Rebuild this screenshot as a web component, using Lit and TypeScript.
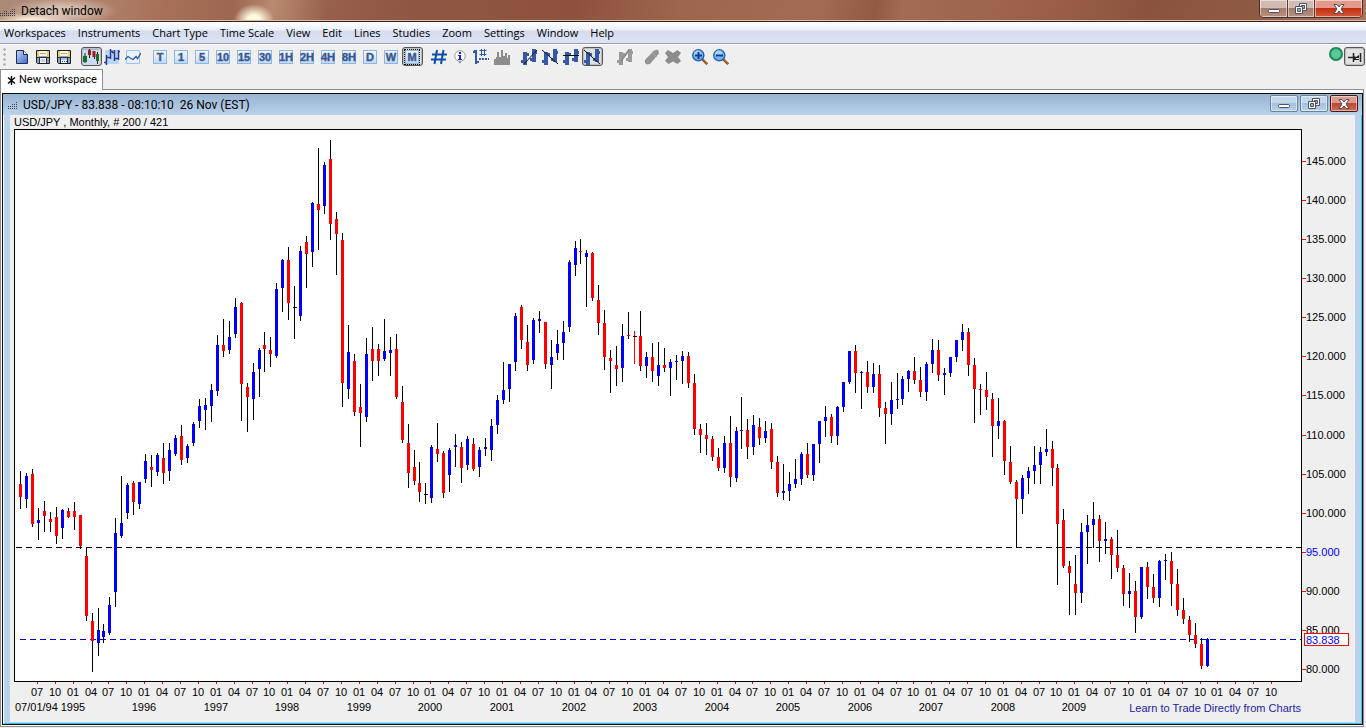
import { LitElement, html, svg, css } from "lit";
import { customElement } from "lit/decorators.js";
import { classMap } from "lit/directives/class-map.js";
import { styleMap } from "lit/directives/style-map.js";

type Tone = "u" | "d" | "n" | "r";
type Candle = [number, number, number, number, Tone];

// Plot space: x grows with time, y grows with falling price.
const PLOT = { x: 15, y: 130, w: 1286, h: 551 };

// high, body top, body bottom, low, tone (up, down, neutral, neutral with red wick)
const CANDLES: Candle[] = [
  [471, 484, 497, 509, "d"], [473, 476, 499, 508, "u"], [469, 474, 524, 527, "d"], [508, 520, 523, 540, "u"],
  [501, 511, 516, 532, "d"], [512, 519, 522, 532, "d"], [507, 517, 536, 544, "d"], [509, 510, 528, 539, "u"],
  [508, 511, 517, 518, "d"], [502, 511, 517, 530, "d"], [515, 515, 546, 549, "d"], [547, 556, 616, 621, "d"],
  [613, 621, 641, 672, "d"], [608, 630, 643, 656, "u"], [624, 631, 637, 643, "u"], [597, 605, 633, 635, "u"],
  [518, 533, 592, 607, "u"], [476, 523, 536, 538, "u"], [483, 485, 513, 519, "u"], [481, 483, 502, 515, "d"],
  [482, 482, 504, 509, "u"], [454, 461, 479, 483, "u"], [455, 467, 470, 487, "d"], [453, 455, 472, 476, "u"],
  [443, 458, 473, 484, "d"], [443, 450, 471, 481, "u"], [435, 438, 454, 456, "u"], [425, 436, 460, 465, "d"],
  [444, 446, 458, 463, "u"], [422, 424, 443, 446, "u"], [399, 406, 421, 428, "u"], [398, 405, 410, 430, "u"],
  [384, 390, 406, 422, "u"], [335, 345, 391, 396, "u"], [319, 345, 351, 357, "d"], [321, 337, 350, 354, "u"],
  [298, 307, 334, 338, "u"], [302, 303, 384, 421, "d"], [383, 387, 397, 432, "d"], [363, 372, 399, 420, "u"],
  [348, 350, 369, 397, "u"], [332, 345, 349, 372, "d"], [337, 350, 354, 367, "d"], [283, 289, 356, 358, "u"],
  [259, 260, 288, 312, "u"], [247, 260, 303, 320, "d"], [286, 307, 308, 339, "n"], [246, 251, 316, 321, "u"],
  [236, 242, 254, 288, "d"], [202, 203, 252, 267, "u"], [148, 204, 210, 250, "d"], [162, 165, 206, 214, "u"],
  [140, 159, 224, 240, "d"], [212, 219, 234, 275, "d"], [233, 240, 383, 407, "d"], [325, 352, 389, 399, "u"],
  [354, 361, 412, 416, "d"], [384, 407, 413, 447, "d"], [338, 354, 417, 422, "u"], [327, 349, 361, 381, "d"],
  [344, 349, 361, 376, "d"], [319, 351, 359, 361, "u"], [337, 350, 353, 376, "u"], [334, 349, 397, 399, "d"],
  [386, 402, 440, 443, "d"], [424, 443, 473, 488, "d"], [450, 467, 481, 485, "d"], [462, 483, 492, 502, "d"],
  [483, 494, 495, 504, "n"], [445, 447, 498, 503, "u"], [423, 449, 454, 462, "d"], [451, 453, 493, 498, "d"],
  [448, 450, 475, 492, "u"], [434, 445, 447, 467, "u"], [442, 447, 468, 483, "d"], [436, 439, 465, 470, "u"],
  [438, 444, 469, 471, "d"], [447, 450, 467, 477, "u"], [438, 447, 449, 456, "u"], [419, 426, 450, 461, "u"],
  [395, 400, 425, 434, "u"], [362, 390, 400, 404, "u"], [364, 364, 389, 402, "u"], [313, 316, 362, 371, "u"],
  [305, 307, 340, 349, "d"], [325, 342, 365, 371, "d"], [318, 320, 360, 364, "u"], [311, 319, 321, 333, "u"],
  [322, 322, 364, 369, "d"], [340, 357, 365, 389, "u"], [330, 344, 353, 360, "u"], [321, 332, 343, 360, "u"],
  [260, 262, 327, 332, "u"], [241, 248, 265, 276, "u"], [239, 251, 252, 264, "d"], [250, 253, 257, 307, "u"],
  [252, 253, 298, 301, "d"], [285, 300, 323, 335, "d"], [310, 323, 357, 370, "d"], [350, 358, 361, 393, "d"],
  [346, 365, 369, 386, "d"], [324, 336, 368, 382, "u"], [312, 335, 336, 339, "d"], [331, 336, 337, 364, "r"],
  [311, 336, 366, 371, "d"], [352, 357, 366, 378, "u"], [343, 357, 371, 382, "d"], [342, 365, 376, 386, "u"],
  [348, 365, 368, 372, "d"], [359, 362, 368, 396, "u"], [355, 361, 362, 380, "u"], [351, 356, 361, 384, "u"],
  [352, 356, 383, 388, "d"], [374, 383, 429, 435, "d"], [424, 429, 435, 453, "d"], [423, 435, 439, 455, "d"],
  [436, 439, 457, 461, "d"], [448, 457, 468, 471, "d"], [436, 443, 468, 473, "u"], [416, 443, 477, 487, "d"],
  [427, 431, 478, 482, "u"], [397, 430, 431, 449, "u"], [419, 430, 447, 459, "d"], [415, 425, 447, 455, "u"],
  [418, 427, 438, 445, "d"], [421, 431, 438, 443, "u"], [423, 429, 462, 469, "d"], [456, 462, 493, 497, "d"],
  [464, 491, 493, 500, "u"], [472, 484, 491, 501, "u"], [459, 479, 484, 488, "u"], [452, 454, 479, 485, "u"],
  [443, 454, 475, 478, "d"], [444, 444, 475, 481, "u"], [421, 421, 444, 463, "u"], [406, 417, 421, 437, "u"],
  [414, 417, 436, 443, "d"], [406, 407, 436, 445, "u"], [382, 382, 407, 412, "u"], [351, 351, 382, 384, "u"],
  [345, 351, 373, 393, "d"], [371, 372, 373, 409, "u"], [361, 372, 387, 393, "d"], [363, 374, 387, 393, "u"],
  [365, 374, 408, 417, "d"], [402, 408, 414, 444, "d"], [382, 400, 414, 425, "u"], [373, 399, 400, 409, "u"],
  [376, 379, 399, 405, "u"], [370, 371, 379, 392, "u"], [357, 371, 380, 384, "d"], [367, 380, 392, 397, "d"],
  [362, 364, 392, 401, "u"], [339, 350, 364, 373, "u"], [340, 350, 375, 381, "d"], [368, 373, 375, 395, "u"],
  [357, 357, 373, 377, "u"], [340, 340, 357, 362, "u"], [324, 332, 340, 351, "u"], [328, 332, 365, 376, "d"],
  [358, 365, 389, 423, "d"], [384, 389, 390, 415, "d"], [372, 390, 397, 410, "d"], [393, 399, 426, 457, "d"],
  [398, 421, 426, 439, "u"], [420, 421, 461, 475, "d"], [446, 462, 482, 484, "d"], [480, 482, 499, 548, "d"],
  [475, 478, 499, 514, "u"], [467, 471, 478, 494, "u"], [446, 465, 471, 484, "u"], [447, 452, 465, 484, "u"],
  [429, 449, 452, 456, "u"], [441, 449, 468, 486, "d"], [464, 468, 524, 585, "d"], [509, 520, 566, 568, "d"],
  [561, 566, 573, 615, "d"], [555, 584, 593, 615, "d"], [523, 532, 593, 603, "u"], [515, 525, 532, 564, "u"],
  [502, 519, 525, 548, "u"], [515, 519, 541, 562, "d"], [522, 539, 541, 554, "u"], [537, 539, 555, 579, "d"],
  [530, 555, 568, 572, "d"], [565, 568, 594, 606, "d"], [573, 591, 594, 608, "u"], [581, 591, 617, 633, "d"],
  [567, 567, 617, 619, "u"], [562, 567, 587, 599, "d"], [574, 587, 598, 603, "d"], [560, 561, 598, 607, "u"],
  [554, 560, 561, 580, "u"], [552, 561, 584, 606, "d"], [569, 584, 610, 616, "d"], [598, 610, 619, 624, "d"],
  [616, 620, 635, 642, "d"], [623, 635, 644, 648, "d"], [638, 644, 666, 669, "d"], [638, 639, 666, 667, "u"],
];

const barX = (i: number) => Math.floor(20.508 + i * 5.96255);
const priceY = (p: number) => Math.floor(669.5 - (p - 80) * 7.816);
const pctX = (x: number) => `${((x - PLOT.x) / PLOT.w) * 100}%`;
const pctY = (y: number) => `${((y - PLOT.y) / PLOT.h) * 100}%`;

const PRICES = Array.from({ length: 14 }, (_, i) => 145 - i * 5);
const MONTHS = Array.from({ length: 70 }, (_, i) => ({
  x: barX(i * 3 + 3) - 1,
  label: ["07", "10", "01", "04"][i % 4],
}));
const YEARS = Array.from({ length: 15 }, (_, i) => ({ x: barX(9 + i * 12) - 1, label: String(1995 + i) }));

const MENUS = [
  "Workspaces", "Instruments", "Chart Type", "Time Scale", "View", "Edit",
  "Lines", "Studies", "Zoom", "Settings", "Window", "Help",
];
const PERIODS = ["T", "1", "5", "10", "15", "30", "1H", "2H", "4H", "8H", "D", "W", "M"];

const bars = (c: string) => svg`
  <path d="M2 3h4v13H2zM0 11h2v3H0zM6 4h2v3H6zM11 0h4v13h-4zM9 9h2v3H9zM15 2h1v3h-1z" fill=${c}></path>`;

const floppy = svg`
  <path d="M1.500 1.500h13v13h-12l-1-1z" fill="#8fa2bd" stroke="#1a2029"></path>
  <path d="M4 2h8v5H4z" fill="#fbf8e2"></path>
  <path d="M2 2h2v6H2zM12 2h2v6h-2z" fill="#e9c96a"></path>
  <path d="M2 8h12v1H2zM4 9h1v5H4zM11 9h1v5h-1z" fill="#2a3340"></path>
  <path d="M5 9h6v5H5z" fill="#f2f4f8"></path>
  <path d="M5 4h6v1H5z" fill="#b8a860"></path>`;

const lens = svg`
  <path d="M10 10l5.2 5.2" stroke="#8a4b12" stroke-width="2.4"></path>
  <path d="M10.4 10l4.6 4.6" stroke="#c98a3a" stroke-width=".8"></path>
  <circle cx="6.3" cy="6.3" r="5.6" fill="#6fb1f0" stroke="#1c5fb8" stroke-width="1.3"></circle>
  <circle cx="5.6" cy="4.9" r="3.4" fill="#a8d3fa"></circle>`;

const ICONS: Record<string, unknown> = {
  doc: svg`
    <path d="M2.500 1.500h7l4 4v9h-11z" fill="url(#page)" stroke="#1d2b57"></path>
    <path d="M9.500 1.500v4h4" fill="#e6eefc" stroke="#1d2b57"></path>
    <defs><linearGradient id="page" x1="0" y1="0" x2="1" y2="1">
      <stop offset="0" stop-color="#c9d9f6"></stop><stop offset=".5" stop-color="#7d9fe0"></stop><stop offset="1" stop-color="#3f6cc9"></stop>
    </linearGradient></defs>`,
  save: svg`${floppy}<path d="M6 10h4v3H6z" fill="#c6ced9"></path>`,
  saveAs: svg`${floppy}<path d="M6 12h1v1H6zM8 12h1v1H8zM10 12h1v1h-1z" fill="#1a46c0"></path><path d="M5 9h6v2H5z" fill="#9cc4ee"></path>`,
  candles: svg`
    <path d="M0 0h16v16H0z" fill="#c9dcf3"></path>
    <path d="M0 0h16v1H0z" fill="#9ab8dc"></path>
    <path d="M2 4v10M6.500 0v9M11.500 2v8M14.500 3v12" stroke="#222"></path>
    <path d="M0 7h4v6H0z" fill="#1c6b2a"></path><path d="M5 1h3v5H5z" fill="#a01818"></path>
    <path d="M9.500 2h3v6h-3z" fill="#a01818"></path><path d="M13 5h3v7h-3z" fill="#1c6b2a"></path>`,
  ohlc: svg`
    <path d="M1 1h14v14H1z" fill="#bcd3f1"></path>
    <path d="M2.500 6v10M0 13.500h2.500M2.500 8.500H5M6.500 0v10M4 8.500h2.500M6.500 2.500H9M10.500 1v11M8 3.500h2.500M10.500 9.500H13M14.500 1v10M12 9.500h2.500M14.500 2.500H16" fill="none" stroke="#24408f" stroke-width="1.500"></path>`,
  line: svg`
    <path d="M1.500 1.500h13v13h-13z" fill="#e8f1fc" stroke="#9fc3ea"></path>
    <path d="M0 10.500l3-3 3 2 2 1 3-3 1.500 2L16 4" fill="none" stroke="#2d5ba8" stroke-width="1.300"></path>`,
  hash: svg`<path d="M6 1L3.500 15M12.500 1L10 15M1 5.500h15M0 10.500h15" fill="none" stroke="#0b4fa8" stroke-width="2"></path>`,
  info: svg`
    <path d="M5.500 11.500L8 15l1.500-3.500z" fill="#8c8c8c"></path>
    <circle cx="8" cy="7" r="5.300" fill="#fafafa" stroke="#a0a0a0" stroke-width="1"></circle>
    <path d="M7 3h2v2H7zM6 6h3v4h1v1H6v-1h1V7H6z" fill="#1226d8"></path>`,
  grid: svg`
    <path d="M1 1h3v14H2V4H0V2h1zM4 12h2v2H4z" fill="#3558a8"></path>
    <path d="M8.500 0v7M11.500 0v7M6.500 1.500h7M6.500 5.500h7" stroke="#3558a8" stroke-width="1"></path>
    <path d="M6 10h10" stroke="#3558a8" stroke-width="2" stroke-dasharray="2 1"></path>`,
  histo: svg`<path d="M0 16V10h2V8h1V3h2v5h2V1h2v6h2V4h2v5h1V6h2v10z" fill="#8c8c8c"></path>`,
  rising: svg`${bars("#3558a8")}<path d="M3 15L16 1" stroke="#111"></path>`,
  falling: svg`${bars("#3558a8")}<path d="M0 1l16 14" stroke="#111"></path>`,
  level: svg`${bars("#3558a8")}<path d="M0 6.500h16" stroke="#111"></path>`,
  wave: svg`${bars("#9a9a9a")}<path d="M4 12L12 1" stroke="#8c8c8c" stroke-width="2"></path>`,
  eraser: svg`<path d="M1 11L10 1.500l4-1 1 4L6 15l-3 .5L1 14z" fill="#939393"></path><path d="M8 4l5 4" stroke="#ababab"></path>`,
  cross: svg`<path d="M3 1l5 3 4.500-3L16 4l-3 4 3 4-3.500 3-4.500-2.500L3.500 15 0 12l3-4-3-4z" fill="#8c8c8c"></path>`,
  zoomIn: svg`${lens}<path d="M3 6.500h7M6.500 3v7" stroke="#123a80" stroke-width="2"></path>`,
  zoomOut: svg`${lens}<path d="M3 6.500h7" stroke="#123a80" stroke-width="2"></path>`,
  pin: svg`
    <path d="M2 8.500h5M7.500 4v9M14.500 4v9" fill="none" stroke="#222" stroke-width="1.500"></path>
    <path d="M8 7l2 1 3-2v5H8z" fill="#222"></path><path d="M10 9.500h3" stroke="#ddd"></path>`,
};

const GROUPS = [
  { items: [["doc", "New"], ["save", "Save"], ["saveAs", "Save as"]] },
  { items: [["candles", "Candlestick chart", "on"], ["ohlc", "Bar chart"], ["line", "Line chart"]] },
  { periods: true, items: [] },
  { items: [["hash", "Grid"], ["info", "Information"], ["grid", "Crosshair"], ["histo", "Volume"]] },
  { items: [["rising", "Rising line"], ["falling", "Falling line"], ["level", "Horizontal line"], ["falling", "Trend line", "on"]] },
  { wide: true, items: [["wave", "Edit line"]] },
  { items: [["eraser", "Erase"], ["cross", "Delete all"]] },
  { items: [["zoomIn", "Zoom in"], ["zoomOut", "Zoom out"]] },
] as { items: string[][]; periods?: boolean; wide?: boolean }[];

// Dotted histogram mark: one number of dots for each column.
const mark = (columns: number[]) => html`
  <svg width=${columns.length * 2} height="9" viewBox="0 0 ${columns.length * 2} 9" aria-hidden="true" shape-rendering="crispEdges">
    ${columns.map((n, c) => Array.from({ length: n }, (_, r) => svg`<rect x=${c * 2} y=${8 - r * 2} width="1" height="1" fill="#3b3f48"></rect>`))}
  </svg>`;

@customElement("tool-icon")
export class ToolIcon extends LitElement {
  static properties = { name: { type: String } };
  declare name: string;
  static styles = css`
    :host { display: block; width: 16px; height: 16px; }
    svg { display: block; width: 16px; height: 16px; }
  `;
  render() {
    return html`<svg viewBox="0 0 16 16" aria-hidden="true">${ICONS[this.name]}</svg>`;
  }
}

@customElement("window-controls")
export class WindowControls extends LitElement {
  static properties = { inner: { type: Boolean, reflect: true } };
  declare inner: boolean;
  static styles = css`
    :host { display: flex; height: 18px; border: 1px solid #4a2f28; border-top: 0; border-radius: 0 0 5px 5px; overflow: hidden; box-sizing: border-box; }
    button { display: flex; align-items: center; justify-content: center; padding: 0; border: 0; width: 28px; border-right: 1px solid #5a3a30; box-shadow: inset 0 0 0 1px #ffffff80; background: linear-gradient(#d2bcb2 45%, #a57c6c 50%, #b98f7e); }
    .mid { width: 27px; }
    .close { width: 47px; border-right: 0; background: linear-gradient(#e29a8a 45%, #c22e12 50%, #d8583a); }
    svg { display: block; width: 14px; height: 12px; }
    :host([inner]) { height: 17px; border: 0; gap: 2px; border-radius: 0; }
    :host([inner]) button { width: 28px; border: 1px solid #6b8299; border-radius: 2px; background: linear-gradient(#c3d8ec 45%, #a5c2de 50%, #b7d1e9); }
    :host([inner]) .close { border-color: #4b1616; background: linear-gradient(#dd9a8e 45%, #bf4733 50%, #cf6a55); }
  `;
  render() {
    return html`
      <button aria-label="Minimize"><svg viewBox="0 0 14 12"><rect x="1.500" y="6.500" width="11" height="3" rx="1" fill="#fff" stroke="#4b5468"></rect></svg></button>
      <button class="mid" aria-label="Restore"><svg viewBox="0 0 14 12">
        <path d="M5.500.500h7v7h-7z" fill="#fff" stroke="#4b5468"></path><path d="M7.500 2.500h3v3h-3z" fill="#9fb0c4" stroke="#4b5468"></path>
        <path d="M1.500 3.500h7v7h-7z" fill="#fff" stroke="#4b5468"></path><path d="M3.500 5.500h3v3h-3z" fill="#9fb0c4" stroke="#4b5468"></path></svg></button>
      <button class="close" aria-label="Close"><svg viewBox="0 0 14 12">
        <path d="M2 1.500h3l2 2.500 2-2.500h3L9 6l3 4.500H9L7 8l-2 2.500H2L5 6z" fill="#fff" stroke="#4b4a58"></path></svg></button>`;
  }
}

@customElement("price-chart")
export class PriceChart extends LitElement {
  static styles = css`
    :host {
      display: grid; flex: 1; grid-template-columns: 1fr 53px; grid-template-rows: 14px 1fr 40px;
      padding-left: 4px; background: #efefef; color: #000;
      font: 11px/14px "Liberation Sans", Arial, sans-serif;
    }
    .caption { grid-column: 1 / 3; margin: 0; white-space: pre; }
    .plot { border: 1px solid #000; background: #fff; position: relative; min-height: 200px; }
    .plot svg { position: absolute; inset: 0; width: 100%; height: 100%; shape-rendering: crispEdges; }
    .prices { position: relative; margin: 1px 0; }
    .price { position: absolute; left: 0; display: flex; align-items: flex-start; height: 14px; margin-top: -7px; }
    .price::before { content: ""; width: 4px; height: 1px; margin-top: 7px; background: #f00; }
    .pivot { color: #00f; }
    .last { position: absolute; left: 2px; width: 45px; height: 13px; box-sizing: border-box; margin-top: -6px; padding-left: 1px; border: 1px solid #f00; background: #fff; color: #00f; line-height: 12px; }
    .times { position: relative; margin: 0 1px; }
    .time { position: absolute; top: 0; width: 20px; margin-left: -10px; padding-top: 3px; text-align: center; }
    .time::before { content: ""; position: absolute; top: 0; left: 10px; width: 1px; height: 2px; background: #f00; }
    .year { position: absolute; top: 18px; width: 40px; margin-left: -20px; text-align: center; }
    .start { position: absolute; top: 18px; left: 0; }
    .promo { position: absolute; top: 19px; right: 0; color: #2121a5; text-decoration: none; }
  `;
  render() {
    return html`
      <p class="caption">USD/JPY , Monthly, # 200 / 421</p>
      <div class="plot">
        <svg viewBox="${PLOT.x} ${PLOT.y} ${PLOT.w} ${PLOT.h}" preserveAspectRatio="none" role="img" aria-label="USD/JPY monthly candles">
          <path d="M16 547.500H1301" stroke="#000" stroke-dasharray="6 4"></path>
          <path d="M20 639.500H1301" stroke="#0000c8" stroke-dasharray="6 4"></path>
          ${CANDLES.map(([hi, top, bottom, low, tone], i) => {
            const x = barX(i);
            const neutral = tone === "n" || tone === "r";
            const fill = neutral ? "#000" : tone === "u" ? "#00f" : "#f00";
            return svg`
              <rect x=${x} y=${hi} width="1" height=${low - hi} fill=${tone === "r" ? "#f00" : "#000"}></rect>
              <rect x=${x - 1} y=${top} width=${neutral ? 4 : 3} height=${bottom - top} fill=${fill}></rect>`;
          })}
        </svg>
      </div>
      <div class="prices">
        ${PRICES.map((p) => html`<span class=${classMap({ price: true, pivot: p === 95 })} style=${styleMap({ top: pctY(priceY(p)) })}>${p.toFixed(3)}</span>`)}
        <span class="last" style=${styleMap({ top: pctY(639) })}>83.838</span>
      </div>
      <div class="times">
        ${MONTHS.map((m) => html`<span class="time" style=${styleMap({ left: pctX(m.x) })}>${m.label}</span>`)}
        <span class="start">07/01/94</span>
        ${YEARS.map((y) => html`<span class="year" style=${styleMap({ left: pctX(y.x) })}>${y.label}</span>`)}
        <a class="promo" href="#">Learn to Trade Directly from Charts</a>
      </div>`;
  }
}

@customElement("app-root")
export class AppRoot extends LitElement {
  static styles = css`
    :host { display: flex; flex-direction: column; min-height: 100vh; background: #efefef; color: #000; font: 11px/16px "Open Sans", "Segoe UI", sans-serif; }
    button { font: inherit; color: inherit; border: 0; background: none; padding: 0; }
    .titlebar {
      display: flex; align-items: flex-start; justify-content: space-between; height: 22px; box-sizing: border-box; padding-right: 3px;
      border-bottom: 1px solid #3c2019; box-shadow: inset 0 -1px #d9beb2;
      background:
        radial-gradient(ellipse 56px 14px at 62px 11px, #e0cbc0cc 30%, transparent),
        radial-gradient(ellipse 40px 8px at 34px 20px, #fff6dc 20%, transparent),
        radial-gradient(ellipse 20px 16px at 254px 20px, #fffbe0 30%, transparent),
        linear-gradient(100deg, #a98a78 0, #b08670 6%, #a87058 12%, #9c6650 17%, #b98a70 20%, #98604c 24%, #8f5743 30%, #8d523e 42%, #9f664e 50%, #a36b53 60%, #935a44 64%, #a36b53 66%, #9b604a 76%, #8b533d 84%, #8f5a44 92%, #a87860);
    }
    .name { display: flex; gap: 5px; align-items: center; padding-top: 3px; font: 12px/16px Roboto, "Segoe UI", sans-serif; }
    .menubar { display: flex; height: 22px; box-sizing: border-box; border-bottom: 1px solid #989ba3; background: linear-gradient(#fff, #eef2fa 35%, #d5dcee 45%, #dde3f4); }
    .menubar button { padding: 0 6px; line-height: 20px; }
    .menubar button:first-child { padding-left: 4px; }
    .toolbar { display: flex; height: 25px; box-sizing: border-box; padding: 2px 1px 3px 3px; border-top: 1px solid #fff; }
    .grip { width: 3px; margin-right: 6px; background: radial-gradient(circle, #b4b4b4 45%, transparent 50%) 0 0 / 3px 5px; }
    .group { display: flex; margin-right: 6px; }
    .wide { margin-left: 6px; }
    .tool { display: flex; align-items: center; box-sizing: border-box; width: 21px; height: 19px; padding-left: 2px; }
    .on { border: 1px solid #555; border-radius: 3px; background: #e2e2e2; box-shadow: inset 0 0 1px 1px #bbb; padding-left: 1px; }
    .period { width: 14px; height: 14px; margin-left: 1px; box-sizing: border-box; border: 1px solid #8fb5e3; background: linear-gradient(#f4f9ff, #c4daf4); color: #35568f; font: bold 11px/12px "Liberation Sans", Arial, sans-serif; -webkit-text-stroke: 1px #35568f66; display: flex; justify-content: center; }
    .on .period { outline: 1px dotted #000; }
    .status { margin-left: auto; display: flex; align-items: flex-start; gap: 1px; }
    .ball { width: 14px; height: 14px; border-radius: 50%; background: radial-gradient(circle, #5cc79b 40%, #12884e 60%); }
    .tabs { display: flex; height: 20px; }
    .tab { display: flex; align-items: center; gap: 3px; height: 21px; box-sizing: border-box; padding: 0 5px 0 6px; border: 1px solid #8b8d99; border-width: 1px 1px 0 1px; background: #fff; position: relative; font: 11px/16px Roboto, "Segoe UI", sans-serif; }
    .star { display: block; width: 9px; height: 9px; }
    .desktop { flex: 1; display: flex; margin: 0 2px 1px 0; padding: 3px 0 1px 1px; border: 1px solid #8b8d99; background: #fff; }
    .window { flex: 1; display: flex; flex-direction: column; border: 1px solid #0b0b0b; background: #b9d1ea; }
    .caption { display: flex; justify-content: space-between; align-items: center; height: 21px; box-sizing: border-box; padding: 0 4px 2px 5px; background: linear-gradient(#99b4d1, #b9d1ea); }
    .caption .name { padding-top: 2px; }
    .body { flex: 1; display: flex; border-left: 1px solid #fff; border-right: 1px solid #35c5e0; border-bottom: 1px solid #35c5e0; padding: 0 6px 1px 6px; }
  `;

  private tool([icon, label, state]: string[]) {
    return html`<button class=${classMap({ tool: true, on: state === "on" })} aria-label=${label}><tool-icon name=${icon}></tool-icon></button>`;
  }

  render() {
    return html`
      <header class="titlebar">
        <div class="name">${mark([2, 2, 3, 3, 2, 3, 4, 4])}<span>Detach window</span></div>
        <window-controls></window-controls>
      </header>
      <nav class="menubar">${MENUS.map((m) => html`<button>${m}</button>`)}</nav>
      <div class="toolbar" role="toolbar">
        <div class="grip"></div>
        ${GROUPS.map((g) => html`<div class=${classMap({ group: true, wide: !!g.wide })}>
          ${g.periods
            ? PERIODS.map((p) => html`<button class=${classMap({ tool: true, on: p === "M" })}><span class="period">${p}</span></button>`)
            : g.items.map((i) => this.tool(i))}
        </div>`)}
        <div class="status"><span class="ball"></span>${this.tool(["pin", "Pin", "on"])}</div>
      </div>
      <div class="tabs">
        <button class="tab"><svg class="star" viewBox="0 0 9 9"><path d="M4.500 0v9M1 1.500l7 6M8 1.500l-7 6" stroke="#000" stroke-width="1.400"></path></svg>New workspace</button>
      </div>
      <main class="desktop">
        <section class="window">
          <div class="caption">
            <div class="name">${mark([2, 2, 3, 3, 4])}<span>USD/JPY - 83.838 - 08:10:10&nbsp; 26 Nov (EST)</span></div>
            <window-controls inner></window-controls>
          </div>
          <div class="body"><price-chart></price-chart></div>
        </section>
      </main>`;
  }
}
